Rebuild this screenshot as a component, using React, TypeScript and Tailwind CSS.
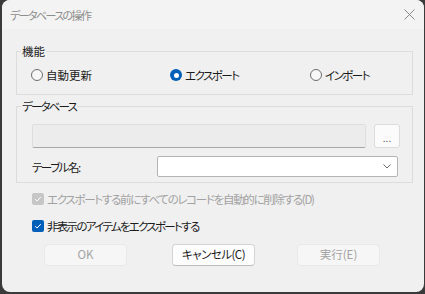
import React from "react";

const font = "font-['Noto_Sans_CJK_JP','Noto_Sans',sans-serif] [font-feature-settings:'palt']";

function Radio({ checked, label, track }: { checked?: boolean; label: string; track: string }) {
  return (
    <div className="flex items-center h-[16px]">
      {checked ? (
        <span className="w-[12px] h-[12px] rounded-full bg-[#005fb8] flex items-center justify-center">
          <span className="w-[5px] h-[5px] rounded-full bg-white" />
        </span>
      ) : (
        <span className="w-[12px] h-[12px] rounded-full border border-[#6e6e6e] bg-[#f7f7f7]" />
      )}
      <span className={"ml-[3px] text-[11.5px] leading-[16px] text-[#1b1b1b] " + track}>{label}</span>
    </div>
  );
}

function Check({ disabled, label, track }: { disabled?: boolean; label: string; track: string }) {
  return (
    <div className="flex items-center h-[16px] ml-[30px]">
      <span
        className={
          "w-[12px] h-[12px] rounded-[2px] flex items-center justify-center " +
          (disabled ? "bg-[#c6c6c6]" : "bg-[#005fb8]")
        }
      >
        <svg width="8" height="8" viewBox="0 0 8 8">
          <path d="M1.2 4.2 L3.1 6 L6.8 2" fill="none" stroke="white" strokeWidth="1" />
        </svg>
      </span>
      <span
        className={
          "ml-[3px] text-[11.5px] leading-[16px] " +
          track +
          " " +
          (disabled ? "text-[#a2a2a2]" : "text-[#1b1b1b]")
        }
      >
        {label}
      </span>
    </div>
  );
}

export default function App() {
  return (
    <div className={"w-[425px] h-[294px] bg-[#3a3a3a] pl-[2px] " + font}>
      <div className="w-[422px] h-[292px] rounded-[8px] bg-[#f0f0f0] flex flex-col overflow-hidden">
        {/* title bar */}
        <div className="h-[29px] flex items-center justify-between pl-[8px] pr-[9px] bg-[#f3f3f3]">
          <span className="text-[11px] text-[#8d8d8d] leading-[16px] tracking-[-1.6px]">データベースの操作</span>
          <svg width="11" height="11" viewBox="0 0 11 11">
            <path d="M0.5 0.5 L10.5 10.5 M10.5 0.5 L0.5 10.5" stroke="#8a8a8a" strokeWidth="1" />
          </svg>
        </div>

        {/* group 機能 */}
        <fieldset className="ml-[14px] mt-[14px] w-[397px] border border-[#dcdcdc] pt-[8px] pb-[11px] pl-[14px]">
          <legend className="ml-[-10px] px-[1px] text-[11.5px] leading-[16px] text-[#1b1b1b]">機能</legend>
          <div className="flex">
            <div className="w-[139px]">
              <Radio label="自動更新" track="tracking-[0px]" />
            </div>
            <div className="w-[140px]">
              <Radio checked label="エクスポート" track="tracking-[-1.5px]" />
            </div>
            <div>
              <Radio label="インポート" track="tracking-[-1.5px]" />
            </div>
          </div>
        </fieldset>

        {/* group データベース */}
        <fieldset className="ml-[14px] mt-[3px] w-[397px] border border-[#dcdcdc] pt-[10px] pb-[5px] pl-[15px]">
          <legend className="ml-[-11px] px-[1px] text-[11.5px] leading-[16px] text-[#1b1b1b] tracking-[-1.8px]">
            データベース
          </legend>
          <div className="flex items-center pr-[12px]">
            <div className="flex-1 h-[24px] bg-[#ececec] border border-[#dedede] border-b-[#a8a8a8] rounded-[2px]" />
            <div className="ml-[8px] w-[26px] h-[24px] bg-[#fbfbfb] border border-[#dcdcdc] rounded-[3px] flex items-center justify-center text-[10px] text-[#555] leading-none pt-[3px]">
              ...
            </div>
          </div>
          <div className="flex items-center mt-[8px] pr-[14px]">
            <span className="text-[11.5px] leading-[16px] text-[#1b1b1b] w-[125px] tracking-[-1.5px]">テーブル名:</span>
            <div className="flex-1 h-[21px] bg-white border border-[#b4b4b4] rounded-[2px] flex items-center justify-end pr-[6px]">
              <svg width="8" height="5" viewBox="0 0 8 5">
                <path d="M0.5 0.5 L4 4 L7.5 0.5" fill="none" stroke="#6a6a6a" strokeWidth="1" />
              </svg>
            </div>
          </div>
        </fieldset>

        <div className="mt-[8px]">
          <Check disabled label="エクスポートする前にすべてのレコードを自動的に削除する(D)" track="tracking-[-1.3px]" />
        </div>
        <div className="mt-[11px]">
          <Check label="非表示のアイテムをエクスポートする" track="tracking-[-1.7px]" />
        </div>

        <div className="mt-[10px] flex">
          <div className="ml-[42px] w-[83px] h-[22px] bg-[#f6f6f6] border border-[#e9e9e9] rounded-[4px] flex items-center justify-center text-[11.5px] text-[#a3a3a3]">
            OK
          </div>
          <div className="ml-[45px] w-[83px] h-[22px] bg-[#fdfdfd] border border-[#d4d4d4] border-b-[#bdbdbd] rounded-[4px] flex items-center justify-center text-[11.5px] text-[#1b1b1b] tracking-[-0.5px]">
            キャンセル(C)
          </div>
          <div className="ml-[42px] w-[83px] h-[22px] bg-[#f6f6f6] border border-[#e9e9e9] rounded-[4px] flex items-center justify-center text-[11.5px] text-[#a3a3a3]">
            実行(E)
          </div>
        </div>
      </div>
    </div>
  );
}
